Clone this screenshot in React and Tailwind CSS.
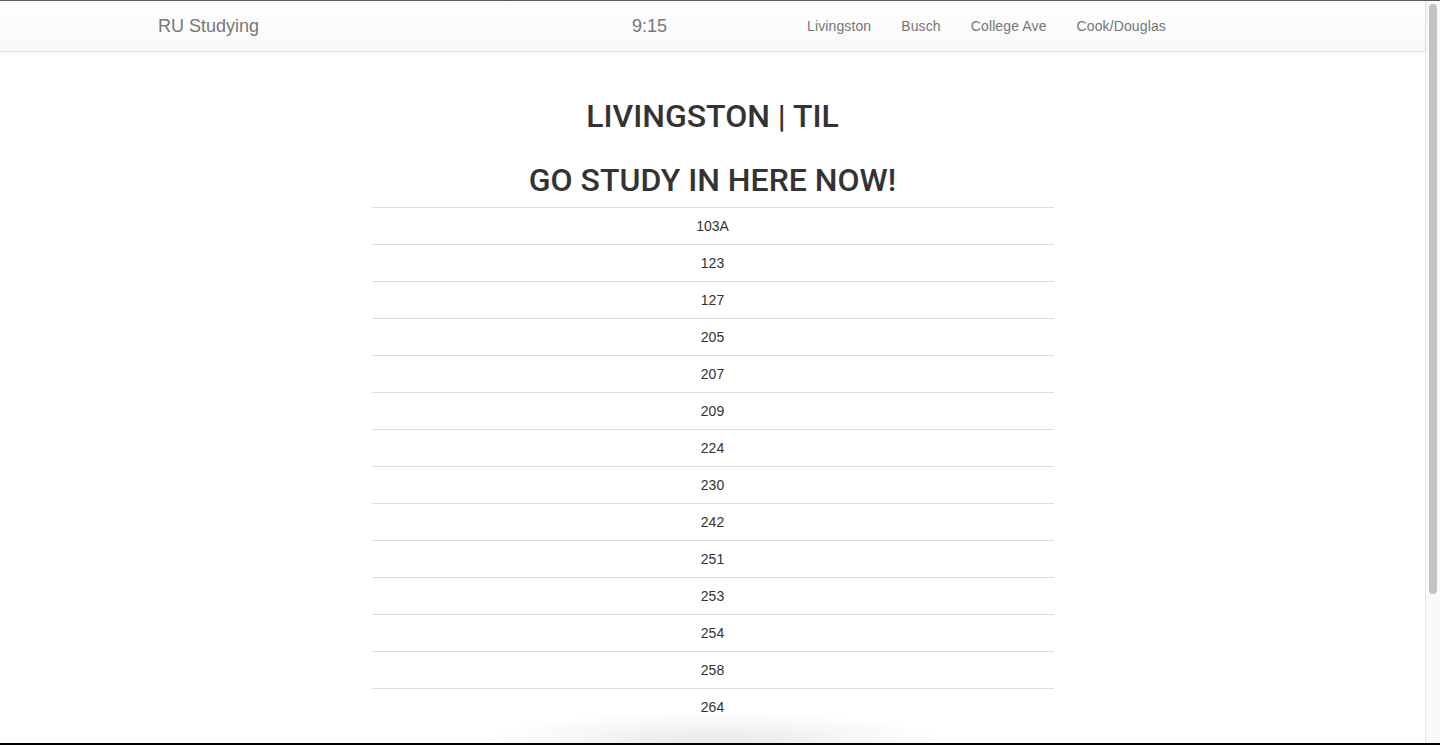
import React from 'react'

const rooms = ['103A', '123', '127', '205', '207', '209', '224', '230', '242', '251', '253', '254', '258', '264']

const campuses = ['Livingston', 'Busch', 'College Ave', 'Cook/Douglas']

export default function App() {
  return (
    <div className="h-[745px] w-[1440px] flex flex-col overflow-hidden bg-white font-['Liberation_Sans',Arial,sans-serif] text-[#333]">
      {/* window frame top */}
      <div className="h-px bg-[#5c5c5c]" />

      <div className="flex flex-1 min-h-0">
        {/* page */}
        <div className="relative flex-1 flex flex-col min-w-0">
          {/* navbar */}
          <nav className="h-[51px] border-b border-[#e3e3e3] bg-[linear-gradient(#ffffff,#f8f8f8)] shadow-[0_1px_5px_rgba(0,0,0,0.075)] flex items-start pl-[158px]">
            <span className="w-[474px] h-[50px] leading-[50px] text-[18px] text-[#777]">RU Studying</span>
            <span className="w-[160px] h-[50px] leading-[50px] text-[18px] text-[#777]">9:15</span>
            <ul className="flex">
              {campuses.map((c) => (
                <li key={c}>
                  <a href="#" className="block px-[15px] py-[15px] leading-[20px] text-[14px] tracking-[0.12px] text-[#777]">
                    {c}
                  </a>
                </li>
              ))}
            </ul>
          </nav>

          {/* content */}
          <main className="flex flex-col items-center pt-[48px]">
            <h2 className="font-['Roboto','Liberation_Sans',sans-serif] text-[32px] leading-[33px] font-medium text-[#333]">LIVINGSTON | TIL</h2>
            <h2 className="mt-[31px] font-['Roboto','Liberation_Sans',sans-serif] text-[32px] leading-[33px] font-medium text-[#333]">GO STUDY IN HERE NOW!</h2>
            <table className="mt-[10px] w-[682px] border-collapse">
              <tbody>
                {rooms.map((r) => (
                  <tr key={r}>
                    <td className="border-t border-[#ddd] p-[8px] text-center text-[14px] leading-[20px] text-[#333]">{r}</td>
                  </tr>
                ))}
              </tbody>
            </table>
          </main>

          {/* soft shadow from the window below */}
          <div className="pointer-events-none absolute bottom-0 left-[480px] h-[32px] w-[470px] bg-[radial-gradient(ellipse_at_bottom,rgba(0,0,0,0.09),rgba(0,0,0,0)_70%)]" />
        </div>

        {/* scrollbar */}
        <div className="w-[15px] border-l border-[#e6e6e6] bg-[#fafafa] pt-[3px] pl-[3px]">
          <div className="h-[590px] w-[8px] rounded-full bg-[#c2c2c2]" />
        </div>
      </div>

      {/* window frame bottom */}
      <div className="h-[2px] bg-black" />
    </div>
  )
}
